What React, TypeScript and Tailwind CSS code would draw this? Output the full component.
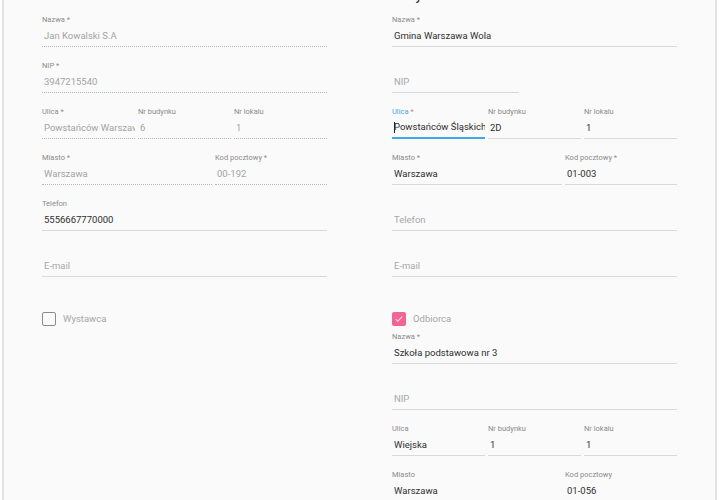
import React from 'react';

type FieldProps = {
  label?: string;
  required?: boolean;
  value?: string;
  placeholder?: string;
  disabled?: boolean;
  focused?: boolean;
  className?: string;
};

const Field = ({ label, required, value, placeholder, disabled, focused, className = '' }: FieldProps) => {
  const line = focused
    ? 'border-b-2 border-[#3fa9e6]'
    : disabled
      ? 'border-b border-dotted border-[#b5b5b5]'
      : 'border-b border-[#d9d9d9]';
  const text = disabled ? 'text-[#a3a3a3]' : 'text-[#2e2e2e]';
  return (
    <div className={`mb-[13px] min-w-0 ${className}`}>
      <div className={`h-[12px] text-[7.5px] leading-[12px] ${focused ? 'text-[#3fa9e6]' : 'text-[#8a8a8a]'}`}>
        {label}
        {label && required && <span className={focused ? 'text-[#e57373]' : ''}> *</span>}
      </div>
      <div className={`flex h-[21px] items-center overflow-hidden whitespace-nowrap pl-[2px] text-[9.5px] ${line}`}>
        {focused && <span className="mr-[-1px] h-[11px] w-px shrink-0 bg-[#222]" />}
        {value ? <span className={text}>{value}</span> : <span className="text-[#a8a8a8]">{placeholder}</span>}
      </div>
    </div>
  );
};

const Check = ({ label, checked }: { label: string; checked?: boolean }) => (
  <div className="mt-[32px] mb-[2px] flex h-[20px] items-center gap-[7px]">
    {checked ? (
      <span className="flex h-[14px] w-[14px] items-center justify-center rounded-[2px] bg-[#f06595]">
        <svg width="10" height="10" viewBox="0 0 24 24" fill="none" stroke="#fde4ee" strokeWidth="2.5">
          <path d="M4 12.5l5 5L20 6" />
        </svg>
      </span>
    ) : (
      <span className="h-[14px] w-[14px] rounded-[2px] border-[1.5px] border-[#8c8c8c]" />
    )}
    <span className="text-[9.5px] text-[#a6a6a6]">{label}</span>
  </div>
);

const App = () => {
  return (
    <div className="h-[500px] w-[720px] overflow-hidden bg-white font-['Roboto',sans-serif]">
      <div className="ml-[2px] h-full w-[715px] border-x-2 border-[#e2e2e2] bg-[#fafafa] pl-[38px]">
        <div className="grid grid-cols-[285px_285px] gap-x-[65px]">
          <div>
            <div className="flex h-[14px]">
              <div className="-mt-[15px] text-[13px] font-medium leading-[16px] text-[#333]">Sprzedawca</div>
            </div>
            <Field label="Nazwa" required value="Jan Kowalski S.A" disabled />
            <Field label="NIP" required value="3947215540" disabled />
            <div className="flex gap-[3px]">
              <Field className="flex-1" label="Ulica" required value="Powstańców Warszawskich" disabled />
              <Field className="flex-1" label="Nr budynku" value="6" disabled />
              <Field className="flex-1" label="Nr lokalu" value="1" disabled />
            </div>
            <div className="flex gap-[3px]">
              <Field className="w-[170px]" label="Miasto" required value="Warszawa" disabled />
              <Field className="flex-1" label="Kod pocztowy" required value="00-192" disabled />
            </div>
            <Field label="Telefon" value="5556667770000" />
            <Field placeholder="E-mail" />
            <Check label="Wystawca" />
          </div>

          <div>
            <div className="flex h-[14px]">
              <div className="-mt-[12px] text-[13px] font-medium leading-[16px] text-[#333]">Nabywca</div>
            </div>
            <Field label="Nazwa" required value="Gmina Warszawa Wola" />
            <Field className="w-[127px]" placeholder="NIP" />
            <div className="flex gap-[3px]">
              <Field className="flex-1" label="Ulica" required value="Powstańców Śląskich" focused />
              <Field className="flex-1" label="Nr budynku" value="2D" />
              <Field className="flex-1" label="Nr lokalu" value="1" />
            </div>
            <div className="flex gap-[3px]">
              <Field className="w-[170px]" label="Miasto" required value="Warszawa" />
              <Field className="flex-1" label="Kod pocztowy" required value="01-003" />
            </div>
            <Field placeholder="Telefon" />
            <Field placeholder="E-mail" />
            <Check label="Odbiorca" checked />
            <Field label="Nazwa" required value="Szkoła podstawowa nr 3" />
            <Field placeholder="NIP" />
            <div className="flex gap-[3px]">
              <Field className="flex-1" label="Ulica" value="Wiejska" />
              <Field className="flex-1" label="Nr budynku" value="1" />
              <Field className="flex-1" label="Nr lokalu" value="1" />
            </div>
            <div className="flex gap-[3px]">
              <Field className="w-[170px]" label="Miasto" value="Warszawa" />
              <Field className="flex-1" label="Kod pocztowy" value="01-056" />
            </div>
          </div>
        </div>
      </div>
    </div>
  );
};

export default App;
